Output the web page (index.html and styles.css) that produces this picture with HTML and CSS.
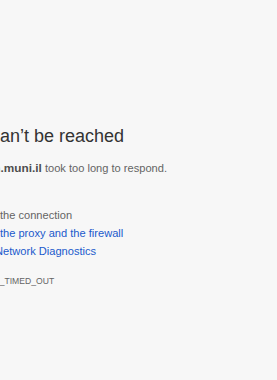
FILE: index.html
```html
<!DOCTYPE html>
<html>
<head>
<meta charset="utf-8">
<link rel="stylesheet" href="styles.css">
</head>
<body>
<div class="wrapper">
  <h1 class="title">This site can’t be reached</h1>
  <p class="desc"><strong class="domain">www.ashkelon.muni.il</strong> took too long to respond.</p>
  <p class="try">Try:</p>
  <ul class="suggestions">
    <li class="item">Checking the connection</li>
    <li class="item"><a class="link" href="#">Checking the proxy and the firewall</a></li>
    <li class="item"><a class="link" href="#">Running Network Diagnostics</a></li>
  </ul>
  <div class="error-code">ERR_CONNECTION_TIMED_OUT</div>
</div>
</body>
</html>
```
FILE: styles.css
```css
html, body {
  margin: 0;
  padding: 0;
  background: #f7f7f7;
  height: 100%;
  overflow: hidden;
}
body {
  font-family: "Liberation Sans", Arial, Helvetica, sans-serif;
  color: #646464;
}
.wrapper {
  margin-left: -81px;
  padding-top: 125px;
  width: 600px;
}
.title {
  margin: 0;
  font-size: 18px;
  line-height: 22px;
  font-weight: normal;
  color: #333;
  white-space: nowrap;
}
.desc {
  margin: 12px 0 0;
  font-size: 11.1px;
  line-height: 18px;
  white-space: nowrap;
}
.domain {
  color: #4d4d4d;
  font-weight: bold;
  font-size: 11.8px;
}
.try {
  margin: 11px 0 0;
  font-size: 11.1px;
  line-height: 18px;
}
.suggestions {
  margin: 0;
  padding: 0 0 0 31.6px;
  font-size: 11.1px;
  line-height: 18px;
  white-space: nowrap;
}
.item {
  margin: 0;
}
.link {
  color: #1a5acc;
  text-decoration: none;
}
.error-code {
  margin-top: 14px;
  font-size: 8.6px;
  line-height: 14px;
  color: #646464;
  text-transform: uppercase;
  white-space: nowrap;
}
```
